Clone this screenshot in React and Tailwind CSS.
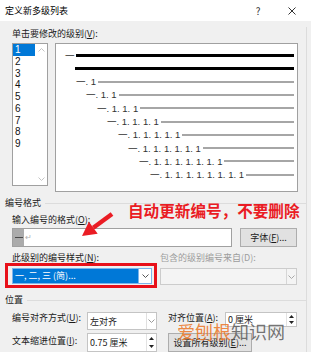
const cjk = "font-['Noto_Sans_CJK_SC','Liberation_Sans',sans-serif]";

const previewRows = [
  { pad: "pl-[9px]", text: "一", thick: true },
  { pad: "pl-[19px]", text: "", thick: true },
  { pad: "pl-[20px]", text: "一" + ". 1".repeat(1) },
  { pad: "pl-[30px]", text: "一" + ". 1".repeat(2) },
  { pad: "pl-[41px]", text: "一" + ". 1".repeat(3) },
  { pad: "pl-[51px]", text: "一" + ". 1".repeat(4) },
  { pad: "pl-[62px]", text: "一" + ". 1".repeat(5) },
  { pad: "pl-[72px]", text: "一" + ". 1".repeat(6) },
  { pad: "pl-[83px]", text: "一" + ". 1".repeat(7) },
  { pad: "pl-[94px]", text: "一" + ". 1".repeat(8) },
];

function Chevron({ up = false, color = "#8a8a8a" }) {
  return (
    <svg width="7" height="4" viewBox="0 0 7 4">
      <path
        d={up ? "M0.5 3.5L3.5 0.5L6.5 3.5" : "M0.5 0.5L3.5 3.5L6.5 0.5"}
        fill="none"
        stroke={color}
        strokeWidth="1"
      />
    </svg>
  );
}

function SpinArrows() {
  return (
    <div className="flex w-[10px] flex-col border-l border-[#e3e3e3]">
      <div className="flex flex-1 items-center justify-center">
        <svg width="5" height="3" viewBox="0 0 5 3">
          <path d="M0 3L2.5 0L5 3Z" fill="#222" />
        </svg>
      </div>
      <div className="flex flex-1 items-center justify-center">
        <svg width="5" height="3" viewBox="0 0 5 3">
          <path d="M0 0L2.5 3L5 0Z" fill="#222" />
        </svg>
      </div>
    </div>
  );
}

export default function App() {
  return (
    <div
      className={`relative h-[352px] w-[311px] overflow-hidden bg-[#f0f0f0] text-[9px] leading-[14px] text-[#1a1a1a] ${cjk}`}
    >
      {/* title bar */}
      <div className="flex h-[21px] items-center bg-white pl-[5px]">
        <span className="text-[9px] text-black">定义新多级列表</span>
        <span className="ml-auto w-[20px] text-center text-[10px] text-[#333]">?</span>
        <div className="ml-[14px] mr-[9px] flex w-[20px] justify-center">
          <svg width="8" height="8" viewBox="0 0 8 8">
            <path d="M0.5 0.5L7.5 7.5M7.5 0.5L0.5 7.5" stroke="#333" strokeWidth="1" />
          </svg>
        </div>
      </div>

      <div className="border-r border-[#dcdcdc] w-[307px] h-full">
        <div className="pl-[12px]">
          <div className="mt-[6px]">
            单击要修改的级别(<u>V</u>):
          </div>
          <div className="mt-[2px] flex">
            {/* level list */}
            <div className="flex h-[143px] w-[36px] border border-[#a0a0a0] bg-white">
              <div className="w-[22px] font-['Liberation_Sans',sans-serif] text-[10px]">
                {[1, 2, 3, 4, 5, 6, 7, 8, 9].map((n) => (
                  <div
                    key={n}
                    className={
                      n === 1
                        ? "h-[11.75px] bg-[#0078d7] pl-[2px] leading-[11.75px] text-white"
                        : "h-[11.75px] pl-[2px] leading-[11.75px] text-[#111]"
                    }
                  >
                    {n}
                  </div>
                ))}
              </div>
              <div className="flex w-[12px] flex-col items-center justify-between py-[4px]">
                <Chevron up color="#c4c4c4" />
                <Chevron color="#c4c4c4" />
              </div>
            </div>

            {/* preview */}
            <div className="ml-[7px] h-[149px] w-[243px] border border-[#a0a0a0] bg-white pr-[3px] pt-[4.4px] font-['Liberation_Sans','Noto_Sans_CJK_SC',sans-serif] text-[9.5px] text-[#333]">
              {previewRows.map((r, i) => (
                <div key={i} className={`flex h-[13.3px] items-center ${r.pad}`}>
                  {r.text && <span className="whitespace-pre leading-[13px]">{r.text}</span>}
                  <div
                    className={
                      r.thick
                        ? `h-[3px] flex-1 bg-black ${r.text ? "ml-[1.5px]" : ""}`
                        : "ml-[2px] h-[2px] flex-1 bg-[#a6a6a6]"
                    }
                  />
                </div>
              ))}
            </div>
          </div>
        </div>

        {/* 编号格式 */}
        <div className="mt-[4px] flex items-center pl-[5px]">
          <span>编号格式</span>
          <div className="ml-[4px] h-px flex-1 bg-[#dcdcdc]" />
        </div>
        <div className="pl-[12px]">
          <div className="mt-[3px]">
            输入编号的格式(<u>O</u>):
          </div>
          <div className="mt-[1px] flex">
            <div className="flex h-[19px] w-[220px] items-stretch border border-[#a0a0a0] bg-white">
              <div className="flex w-[11px] items-center justify-center bg-[#ababab]">
                <div className="h-px w-[8px] bg-[#4a4a4a]" />
              </div>
              <span className="ml-[1px] text-[8px] leading-[15px] text-[#b0b0b0]">↵</span>
            </div>
            <div className="ml-[8px] flex h-[19px] w-[57px] items-center justify-center border border-[#adadad] bg-[#e1e1e1]">
              字体(<u>F</u>)...
            </div>
          </div>

          <div className="mt-[4px] flex">
            <div className="w-[148px]">
              此级别的编号样式(<u>N</u>):
            </div>
            <div className="text-[#9d9d9d]">包含的级别编号来自(D):</div>
          </div>
          <div className="mt-[3px] flex">
            <div className="flex h-[16px] w-[140px] border border-[#7eb4ea] bg-white">
              <div className="flex flex-1 items-center bg-[#0078d7] pl-[2px] text-white">
                一, 二, 三 (简)...
              </div>
              <div className="flex w-[13px] items-center justify-center border-l border-[#7eb4ea]">
                <Chevron color="#555" />
              </div>
            </div>
            <div className="ml-[8px] flex h-[17px] w-[137px] border border-[#cccccc] bg-[#f4f4f4]">
              <div className="flex-1" />
              <div className="flex w-[10px] items-center justify-center border-l border-[#d6d6d6]">
                <Chevron color="#a8a8a8" />
              </div>
            </div>
          </div>
        </div>

        {/* 位置 */}
        <div className="mt-[8px] flex items-center pl-[5px]">
          <span>位置</span>
          <div className="ml-[4px] h-px flex-1 bg-[#dcdcdc]" />
        </div>
        <div className="pl-[12px]">
          <div className="mt-[5px] flex items-start">
            <div className="-mt-px w-[75px]">
              编号对齐方式(<u>U</u>):
            </div>
            <div className="flex h-[18px] w-[70px] border border-[#c4c4c4] bg-white">
              <div className="flex flex-1 items-center pl-[2px] pt-[1px]">左对齐</div>
              <div className="flex w-[10px] items-center justify-center border-l border-[#e0e0e0]">
                <Chevron color="#9a9a9a" />
              </div>
            </div>
            <div className="-mt-px ml-[11px] w-[57px]">
              对齐位置(<u>A</u>):
            </div>
            <div className="flex h-[15px] w-[72px] border border-[#c4c4c4] bg-white">
              <div className="flex flex-1 items-center pl-[2px]">0 厘米</div>
              <SpinArrows />
            </div>
          </div>

          <div className="mt-[3px] flex items-start">
            <div className="mt-[1px] w-[75px]">
              文本缩进位置(<u>I</u>):
            </div>
            <div className="flex h-[19px] w-[70px] border border-[#c4c4c4] bg-white">
              <div className="flex flex-1 items-center pl-[2px]">0.75 厘米</div>
              <SpinArrows />
            </div>
            <div className="ml-[11px] flex h-[19px] w-[84px] items-center justify-center border border-[#adadad] bg-[#e1e1e1]">
              设置所有级别(<u>E</u>)...
            </div>
          </div>
        </div>
      </div>

      {/* annotations */}
      <div className="absolute left-[128px] top-[201px] text-[15.6px] font-bold leading-[18px] text-[#ea1c24]">
        自动更新编号，不要删除
      </div>
      <svg className="pointer-events-none absolute left-0 top-0" width="311" height="352">
        <line x1="112" y1="214" x2="93.3" y2="227.7" stroke="#ea1c24" strokeWidth="4.5" />
        <polygon points="82,236 97.7,233.7 88.9,221.7" fill="#ea1c24" />
      </svg>
      <div className="pointer-events-none absolute left-[5px] top-[263px] h-[25px] w-[152px] border-[3.5px] border-[#e8101a]" />

      {/* watermark */}
      <div className="pointer-events-none absolute left-[177px] top-[321px] text-[18px] leading-[20px]">
        <span className="text-[#ec7a2c]/90">爱刨根</span>
        <span className="text-[#5c5c5c]/85">知识网</span>
      </div>
    </div>
  );
}
